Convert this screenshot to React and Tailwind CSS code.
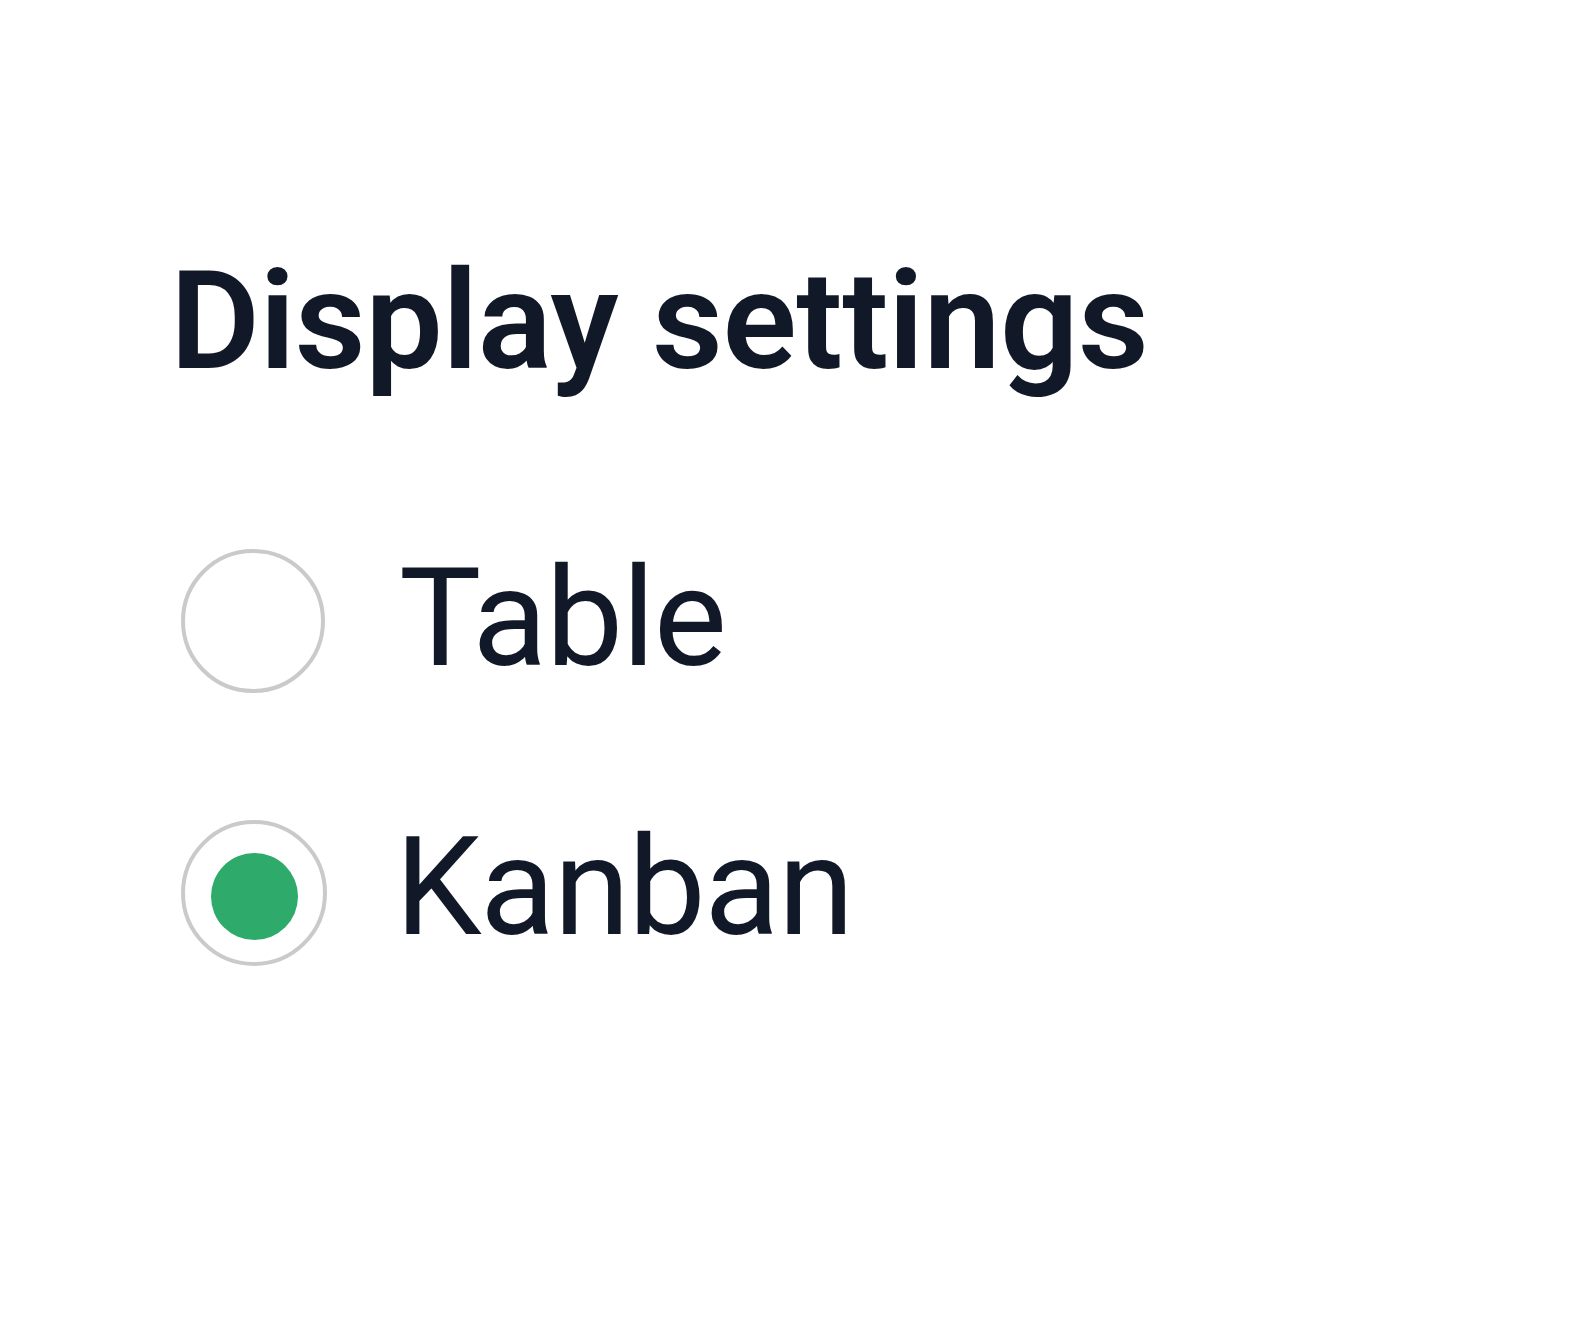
export default function App() {
  const font = { fontFamily: 'Roboto, "Liberation Sans", sans-serif' };
  return (
    <div className="min-h-[1322px] w-[1580px] bg-white pt-[252px] pl-[170px] text-[#111827]" style={font}>
      <h2 className="text-[138px] leading-none font-semibold tracking-[-0.5px]">Display settings</h2>
      <div className="mt-[159px] ml-[11px] flex flex-col gap-[125px]">
        <label className="flex items-start gap-[74px]">
          <span className="w-[144px] h-[144px] rounded-full border-[4px] border-[#cacaca] shrink-0"></span>
          <span className="text-[138px] leading-none font-normal tracking-[-1.5px]">Table</span>
        </label>
        <label className="flex items-start gap-[68px]">
          <span className="mt-[2px] w-[146px] h-[146px] rounded-full border-[4px] border-[#cacaca] shrink-0 flex items-center justify-center">
            <span className="mt-[6px] w-[87px] h-[87px] rounded-full bg-[#2eab6b]"></span>
          </span>
          <span className="text-[138px] leading-none font-normal tracking-[-1.5px]">Kanban</span>
        </label>
      </div>
    </div>
  );
}
